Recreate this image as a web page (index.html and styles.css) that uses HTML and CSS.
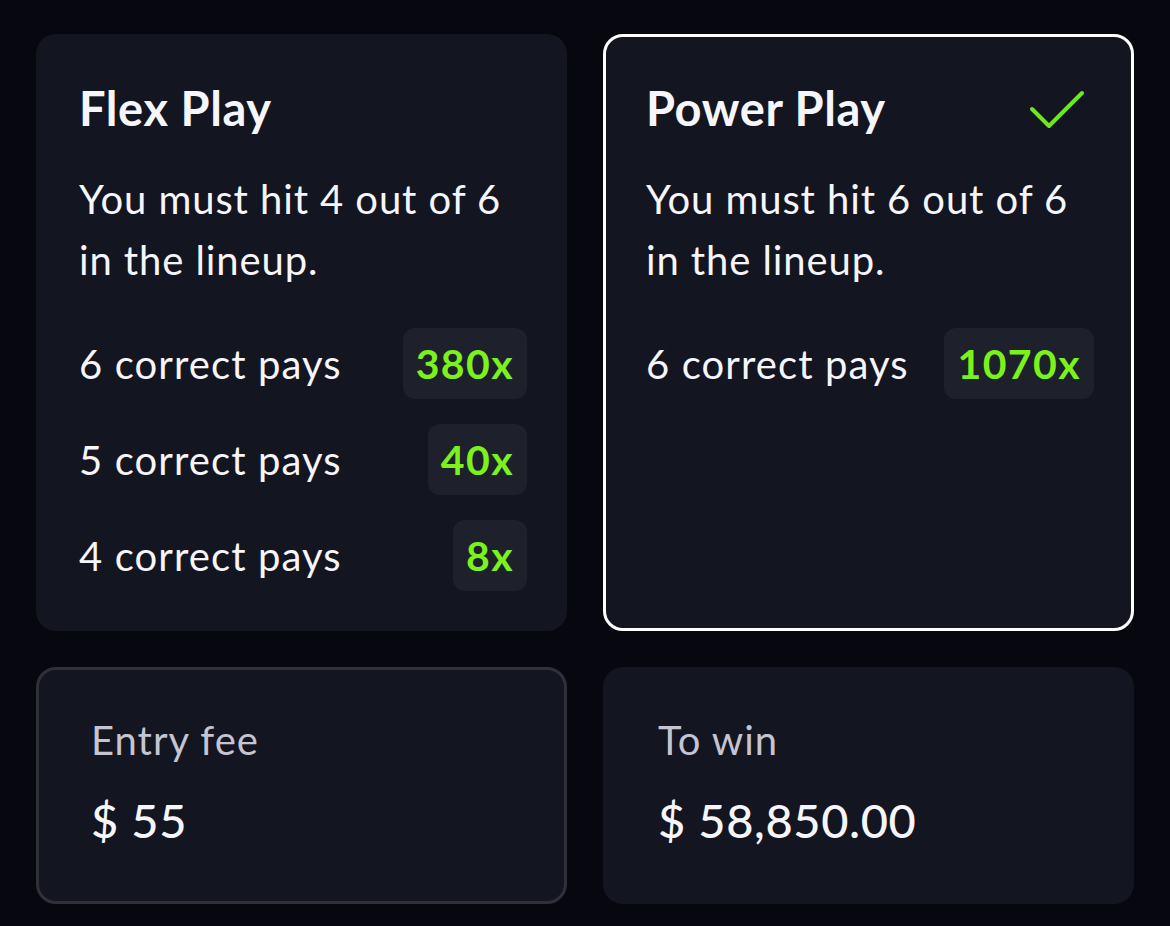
FILE: index.html
```html
<!DOCTYPE html>
<html lang="en">
<head>
  <meta charset="UTF-8" />
  <meta name="viewport" content="width=device-width, initial-scale=1.0"/>
  <title>Play type</title>
  <link rel="stylesheet" href="styles.css">
</head>
<body>
  <div class="grid">
    <div class="card play">
      <div class="play-head">
        <h2>Flex Play</h2>
      </div>
      <p class="desc">You must hit 4 out of 6 in the lineup.</p>
      <div class="rows">
        <div class="row"><span>6 correct pays</span><span class="mult">380x</span></div>
        <div class="row"><span>5 correct pays</span><span class="mult">40x</span></div>
        <div class="row"><span>4 correct pays</span><span class="mult">8x</span></div>
      </div>
    </div>

    <div class="card play selected">
      <div class="play-head">
        <h2>Power Play</h2>
        <svg class="check" width="56" height="40" viewBox="0 0 56 40">
          <path d="M3 19 L20 36 L53 3" fill="none" stroke="#6ee81c" stroke-width="4" stroke-linecap="round" stroke-linejoin="round"/>
        </svg>
      </div>
      <p class="desc">You must hit 6 out of 6 in the lineup.</p>
      <div class="rows">
        <div class="row"><span>6 correct pays</span><span class="mult">1070x</span></div>
      </div>
    </div>

    <div class="card amount outlined">
      <div class="label">Entry fee</div>
      <div class="value">$ 55</div>
    </div>

    <div class="card amount">
      <div class="label">To win</div>
      <div class="value">$ 58,850.00</div>
    </div>
  </div>
</body>
</html>
```

FILE: styles.css
```css
body {
  margin: 0;
  background: #07080f;
  font-family: Lato, 'Open Sans', sans-serif;
  color: #f6f5fa;
}

.grid {
  display: grid;
  grid-template-columns: 1fr 1fr;
  grid-template-rows: 597px 237px;
  gap: 36px;
  padding: 34px 36px;
}

.card {
  background: #131520;
  border-radius: 20px;
  border: 3px solid transparent;
}

.play {
  padding: 41px 37px 38px 40px;
}

.selected {
  border-color: #ffffff;
}

.play-head {
  display: flex;
  justify-content: space-between;
  align-items: center;
  height: 60px;
}

.play-head h2 {
  margin: 0;
  font-size: 47px;
  font-weight: 700;
  letter-spacing: 0.6px;
}

.check {
  margin-right: 9px;
  margin-top: 4px;
}

.desc {
  margin: 31px 0 0;
  font-size: 40px;
  line-height: 61px;
  font-weight: 400;
  letter-spacing: 0.9px;
  max-width: 440px;
}

.rows {
  margin-top: 37px;
  display: flex;
  flex-direction: column;
  gap: 25px;
}

.row {
  display: flex;
  justify-content: space-between;
  align-items: center;
  font-size: 40px;
  letter-spacing: 1.1px;
}

.mult {
  background: #1e202b;
  border-radius: 12px;
  height: 71px;
  line-height: 71px;
  padding: 0 13px;
  color: #7cf21c;
  font-weight: 700;
  font-size: 41px;
  letter-spacing: 1.4px;
}

.amount {
  padding: 45px 52px;
}

.outlined {
  border-color: #2f303a;
}

.label {
  font-size: 40px;
  color: #c5c4d0;
  line-height: 50px;
  letter-spacing: 1px;
}

.value {
  margin-top: 28px;
  font-size: 47px;
  font-weight: 500;
  line-height: 54px;
  letter-spacing: 0.6px;
}
```
